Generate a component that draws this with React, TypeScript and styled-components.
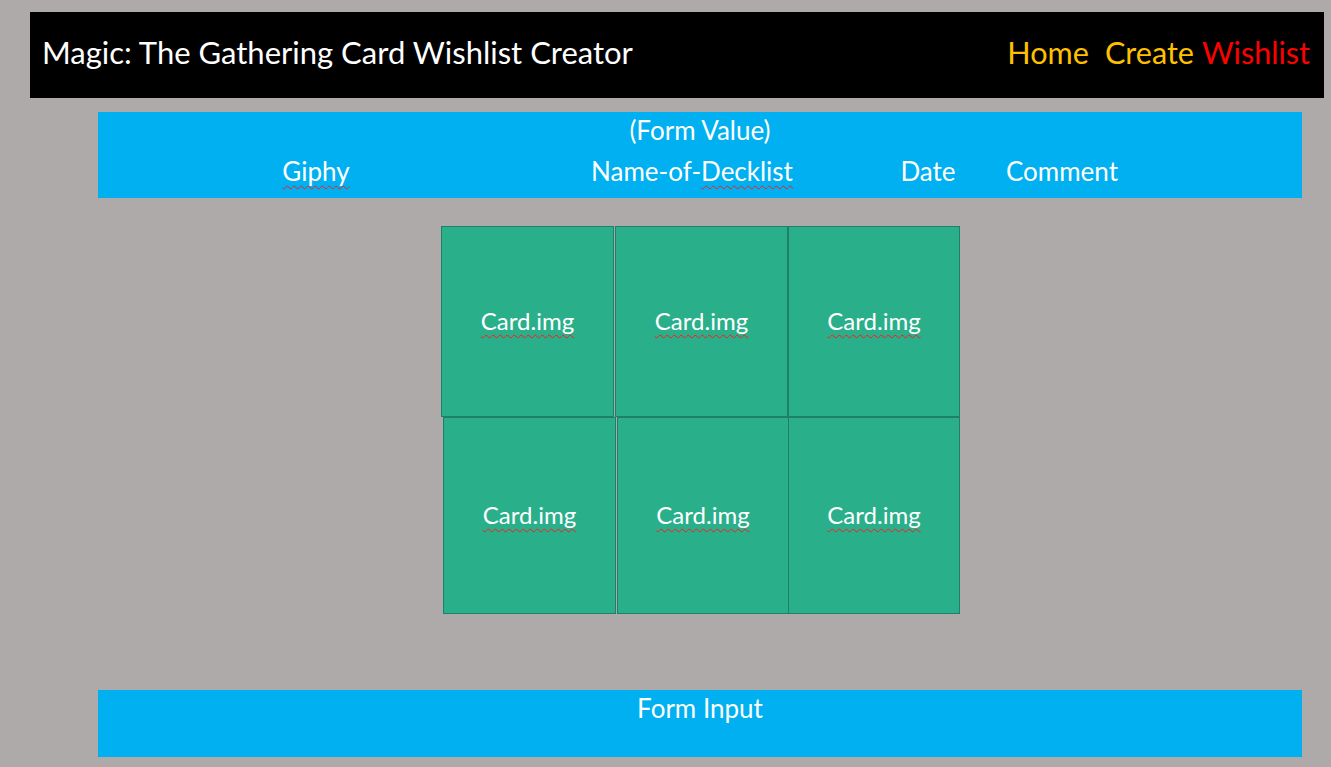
import React from "react";
import styled, { createGlobalStyle } from "styled-components";

const Global = createGlobalStyle`
  html, body { margin: 0; padding: 0; background: #aeaaaa; }
  body { font-family: Lato, "Open Sans", "Liberation Sans", sans-serif; }
  * { box-sizing: border-box; }
`;

const Page = styled.div`
  width: 1331px;
  height: 767px;
  background: #aeaaaa;
  padding-top: 12px;
  display: flex;
  flex-direction: column;
  overflow: hidden;
`;

const Header = styled.header`
  margin: 0 7px 0 30px;
  height: 86px;
  background: #000;
  display: flex;
  align-items: center;
  justify-content: space-between;
  padding: 0 14px 6px 12px;
`;

const Title = styled.h1`
  margin: 0;
  font-weight: 400;
  font-size: 31px;
  color: #fff;
`;

const Nav = styled.nav`
  display: flex;
  font-size: 30.6px;
`;

const NavLink = styled.span<{ $color: string; $gap?: number }>`
  color: ${(p) => p.$color};
  margin-left: ${(p) => p.$gap ?? 0}px;
`;

const BlueBar = styled.section<{ $height: number; $top: number }>`
  margin: ${(p) => p.$top}px 29px 0 98px;
  height: ${(p) => p.$height}px;
  background: #00b0f0;
  color: #fff;
  font-size: 26px;
  display: flex;
  flex-direction: column;
  align-items: center;
`;

const BarTitle = styled.div<{ $pad: number }>`
  padding-top: ${(p) => p.$pad}px;
  line-height: 30px;
`;

const Columns = styled.div`
  align-self: stretch;
  display: grid;
  grid-template-columns: 436px 316px 156px 110px;
  margin-top: 11px;
  line-height: 30px;
`;

const Col = styled.div`
  text-align: center;
  white-space: nowrap;
`;

const Squiggle = styled.span`
  text-decoration: underline wavy #ff1a1a;
  text-decoration-thickness: 1.3px;
  text-decoration-skip-ink: none;
  text-underline-offset: 4px;
`;

const Grid = styled.div`
  margin-top: 28px;
  display: flex;
  flex-direction: column;
`;

const CardRow = styled.div<{ $offset: number; $height: number }>`
  display: flex;
  margin-left: ${(p) => p.$offset}px;
  height: ${(p) => p.$height}px;
`;

const Card = styled.div<{ $width: number; $gap: number }>`
  width: ${(p) => p.$width}px;
  margin-left: ${(p) => p.$gap}px;
  background: #2aaf8b;
  border: 1px solid #1f7f68;
  display: flex;
  align-items: center;
  justify-content: center;
  color: #fff;
  font-size: 24px;
  padding-bottom: 2px;
`;

const cardsTop = [
  { w: 173, g: 0 },
  { w: 173, g: 1 },
  { w: 172, g: 0 },
];
const cardsBottom = [
  { w: 173, g: 0 },
  { w: 172, g: 1 },
  { w: 172, g: -1 },
];

export default function App() {
  return (
    <>
      <Global />
      <Page>
        <Header>
          <Title>Magic: The Gathering Card Wishlist Creator</Title>
          <Nav>
            <NavLink $color="#ffc000">Home</NavLink>
            <NavLink $color="#ffc000" $gap={16}>Create</NavLink>
            <NavLink $color="#ff0000" $gap={8}>Wishlist</NavLink>
          </Nav>
        </Header>

        <BlueBar $height={86} $top={14}>
          <BarTitle $pad={3}>(Form Value)</BarTitle>
          <Columns>
            <Col><Squiggle>Giphy</Squiggle></Col>
            <Col>Name-of-<Squiggle>Decklist</Squiggle></Col>
            <Col>Date</Col>
            <Col>Comment</Col>
          </Columns>
        </BlueBar>

        <Grid>
          <CardRow $offset={441} $height={191}>
            {cardsTop.map((c, i) => (
              <Card key={i} $width={c.w} $gap={c.g}>
                <Squiggle>Card.img</Squiggle>
              </Card>
            ))}
          </CardRow>
          <CardRow $offset={443} $height={197}>
            {cardsBottom.map((c, i) => (
              <Card key={i} $width={c.w} $gap={c.g}>
                <Squiggle>Card.img</Squiggle>
              </Card>
            ))}
          </CardRow>
        </Grid>

        <BlueBar $height={67} $top={76}>
          <BarTitle $pad={3}>Form Input</BarTitle>
        </BlueBar>
      </Page>
    </>
  );
}
